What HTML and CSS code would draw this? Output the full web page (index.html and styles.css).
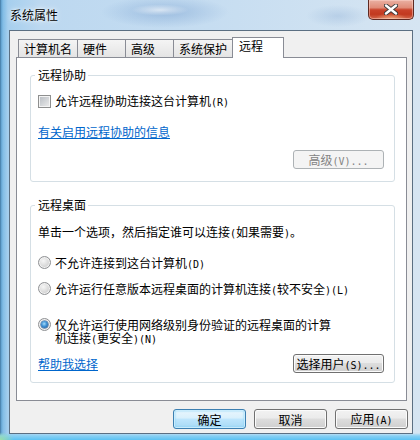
FILE: index.html
```html
<!DOCTYPE html>
<html lang="zh-CN">
<head>
<meta charset="utf-8">
<title>系统属性</title>
<link rel="stylesheet" href="styles.css">
</head>
<body>
<div class="window">
  <div class="titlebar">
    <span class="title">系统属性</span>
    <button class="close" aria-label="关闭">
      <svg width="14" height="11" viewBox="0 0 14 11">
        <path d="M2 1.5 L12 9.5 M12 1.5 L2 9.5" stroke="#3a3a3a" stroke-width="4.2" stroke-linecap="round"/>
        <path d="M2 1.5 L12 9.5 M12 1.5 L2 9.5" stroke="#ffffff" stroke-width="2.4" stroke-linecap="round"/>
      </svg>
    </button>
  </div>

  <div class="client">
    <div class="tabs">
      <div class="tab">计算机名</div>
      <div class="tab">硬件</div>
      <div class="tab">高级</div>
      <div class="tab">系统保护</div>
      <div class="tab active">远程</div>
    </div>

    <div class="panel">
      <fieldset class="group g1">
        <legend>远程协助</legend>
        <div class="gbody">
          <label class="opt first">
            <span class="check"></span>
            <span class="txt">允许远程协助连接这台计算机<span class="lat">(R)</span></span>
          </label>
          <a class="link info" href="#">有关启用远程协助的信息</a>
          <div class="btnrow">
            <button class="btn wide" disabled>高级<span class="lat">(V)...</span></button>
          </div>
        </div>
      </fieldset>

      <fieldset class="group g2">
        <legend>远程桌面</legend>
        <div class="gbody">
          <p class="desc">单击一个选项，然后指定谁可以连接<span class="lat">(</span>如果需要<span class="lat">)</span>。</p>
          <label class="opt r1">
            <span class="radio"></span>
            <span class="txt">不允许连接到这台计算机<span class="lat">(D)</span></span>
          </label>
          <label class="opt r2">
            <span class="radio"></span>
            <span class="txt">允许运行任意版本远程桌面的计算机连接<span class="lat">(</span>较不安全<span class="lat">)(L)</span></span>
          </label>
          <label class="opt r3">
            <span class="radio on"><span class="dot"></span></span>
            <span class="txt wrap">仅允许运行使用网络级别身份验证的远程桌面的计算机连接<span class="lat">(</span>更安全<span class="lat">)(N)</span></span>
          </label>
          <div class="footrow">
            <a class="link" href="#">帮助我选择</a>
            <button class="btn wide">选择用户<span class="lat">(S)...</span></button>
          </div>
        </div>
      </fieldset>
    </div>

    <div class="footer">
      <button class="btn default">确定</button>
      <button class="btn">取消</button>
      <button class="btn">应用<span class="lat">(A)</span></button>
    </div>
  </div>
</div>
</body>
</html>
```

FILE: styles.css
```css
* {
  box-sizing: border-box;
}

html,
body {
  margin: 0;
  padding: 0;
}

body {
  width: 420px;
  height: 440px;
  overflow: hidden;
  font-family: "Noto Sans CJK SC", sans-serif;
  font-size: 12px;
  line-height: 13px;
  color: #000;
}

/* Aero glass frame */
.window {
  width: 420px;
  height: 440px;
  display: flex;
  flex-direction: column;
  background:
    radial-gradient(ellipse 36px 7px at 160px 10px, rgba(255, 255, 255, 0.6), rgba(255, 255, 255, 0) 80%),
    radial-gradient(ellipse 80px 20px at 165px 12px, rgba(92, 138, 196, 0.38), rgba(92, 138, 196, 0) 80%),
    radial-gradient(ellipse 40px 14px at 338px 16px, rgba(110, 150, 200, 0.25), rgba(110, 150, 200, 0) 80%),
    radial-gradient(ellipse 14px 8px at 0 440px, #9fe0a8, rgba(159, 224, 168, 0) 100%),
    linear-gradient(to top, #5cc2f3 0, #86cff3 4px, rgba(160, 210, 240, 0) 7px),
    linear-gradient(to right, #3d6f96 0, #5f9fcd 1px, #82bde6 3px, #a6cfee 8px, #bcd8f0 40px, #c6ddf1 50%, #d6e5f2 100%);
}

.titlebar {
  height: 30px;
  flex: none;
  display: flex;
  justify-content: space-between;
  align-items: flex-start;
  padding: 0 6px 0 10px;
}

.title {
  margin-top: 8px;
  line-height: 13px;
  text-shadow: 0 0 6px rgba(255, 255, 255, 0.95), 0 0 3px #fff;
}

.close {
  width: 46px;
  height: 20px;
  padding: 0;
  display: flex;
  align-items: center;
  justify-content: center;
  border: 1px solid #5e2a22;
  border-top: none;
  border-radius: 0 0 5px 5px;
  background:
    radial-gradient(ellipse 16px 6px at 50% 100%, rgba(255, 200, 150, 0.7), rgba(255, 200, 150, 0) 100%),
    linear-gradient(#eab1a3 0, #e08c78 40%, #c9432a 52%, #c2391f 75%, #d2664a 100%);
  box-shadow: inset 0 0 0 1px rgba(255, 220, 210, 0.45);
}

/* client area */
.client {
  margin-left: 9px;
  width: 404px;
  height: 404px;
  flex: none;
  display: flex;
  flex-direction: column;
  background: #f0f0f0;
  border: 1px solid #5b6f82;
}

.tabs {
  height: 26px;
  flex: none;
  display: flex;
  align-items: flex-end;
  padding-left: 8px;
}

.tab {
  height: 18px;
  min-width: 49px;
  padding: 2px 5px 0;
  margin-left: -1px;
  border: 1px solid #898c95;
  border-bottom: none;
  background: linear-gradient(#f4f4f4, #e4e4e4);
  line-height: 14px;
  white-space: nowrap;
}

.tab:first-child {
  margin-left: 0;
}

.tab.active {
  position: relative;
  z-index: 1;
  height: 21px;
  min-width: 52px;
  padding: 1px 6px 0;
  margin-bottom: -1px;
  background: #fff;
}

.panel {
  margin-left: 6px;
  width: 391px;
  height: 344px;
  flex: none;
  background: #fff;
  border: 1px solid #898c95;
  padding: 11px 11px 0 13px;
}

/* group boxes */
.group {
  margin: 0;
  min-inline-size: auto;
  border: 1px solid #d5dfe5;
  border-radius: 3px;
  padding: 0 10px 0 4px;
}

.group legend {
  padding: 0 2px 0 3px;
  line-height: 12px;
  height: 12px;
}

.g1 {
  height: 113px;
}

.g2 {
  margin-top: 17px;
  height: 184px;
}

.gbody {
  padding-left: 3px;
  display: flex;
  flex-direction: column;
  align-items: flex-start;
}

/* half-width latin, as in the dialog font */
.lat {
  font-family: "DejaVu Sans Mono", monospace;
  font-size: 10px;
  line-height: 10px;
}

.opt {
  display: flex;
  align-items: flex-start;
  gap: 4px;
  height: 13px;
}

.txt {
  display: block;
  height: 13px;
  line-height: 13px;
  white-space: nowrap;
}

.opt.first {
  margin-top: 13px;
}

.check {
  flex: none;
  width: 13px;
  height: 13px;
  margin-top: 1px;
  border: 1px solid #8e8f8f;
  background: linear-gradient(135deg, #b6bbc1, #eeeeee);
  box-shadow: inset 0 0 0 1px #f4f4f4;
}

.radio {
  flex: none;
  width: 13px;
  height: 13px;
  display: flex;
  align-items: center;
  justify-content: center;
  border: 1px solid #8f9194;
  border-radius: 50%;
  background: radial-gradient(circle at 40% 35%, #f6f6f6, #d6d6d6 60%, #c3c3c3);
  box-shadow: inset 0 0 0 1px #f2f2f2;
}

.radio .dot {
  width: 7px;
  height: 7px;
  border-radius: 50%;
  background: radial-gradient(circle at 45% 40%, #a6dcfa 0, #3f91d5 45%, #1b4f8e 100%);
  box-shadow: 0 0 0 0.5px #2b5f96;
}

.link {
  display: block;
  height: 13px;
  color: #0066cc;
  text-decoration: underline;
}

.link.info {
  margin-top: 18px;
}

.btnrow {
  align-self: stretch;
  display: flex;
  justify-content: flex-end;
  margin-top: 12px;
}

.desc {
  margin: 14px 0 0;
  height: 13px;
  white-space: nowrap;
}

.r1 {
  margin-top: 18px;
}

.r2 {
  margin-top: 13px;
}

.r3 {
  margin-top: 23px;
  height: 26px;
}

.r3 .wrap {
  width: 282px;
  height: 26px;
  white-space: normal;
}

.footrow {
  align-self: stretch;
  display: flex;
  justify-content: space-between;
  align-items: center;
  margin-top: 10px;
}

/* push buttons */
.btn {
  font-family: inherit;
  font-size: 12px;
  line-height: 13px;
  height: 19px;
  padding: 0;
  color: #000;
  border: 1px solid #707070;
  border-radius: 3px;
  background: linear-gradient(#f2f2f2 0, #ebebeb 45%, #dddddd 50%, #cfcfcf 100%);
  box-shadow: inset 0 0 0 1px #fbfbfb;
}

.btn.wide {
  width: 91px;
}

.btn:disabled {
  color: #838383;
  border-color: #adb2b5;
  background: #f4f4f4;
  box-shadow: none;
}

.btn.default {
  border-color: #3c7fb1;
  background: linear-gradient(#eaf6fd 0, #d9f0fc 45%, #bee6fd 50%, #a7d9f5 100%);
  box-shadow: inset 0 0 0 1px #c9ecfd, inset 0 0 2px 1px #7fd0f7;
}

.footer {
  display: flex;
  justify-content: flex-end;
  gap: 8px;
  padding-right: 4px;
  margin-top: 8px;
}

.footer .btn {
  width: 73px;
  height: 20px;
}
```
